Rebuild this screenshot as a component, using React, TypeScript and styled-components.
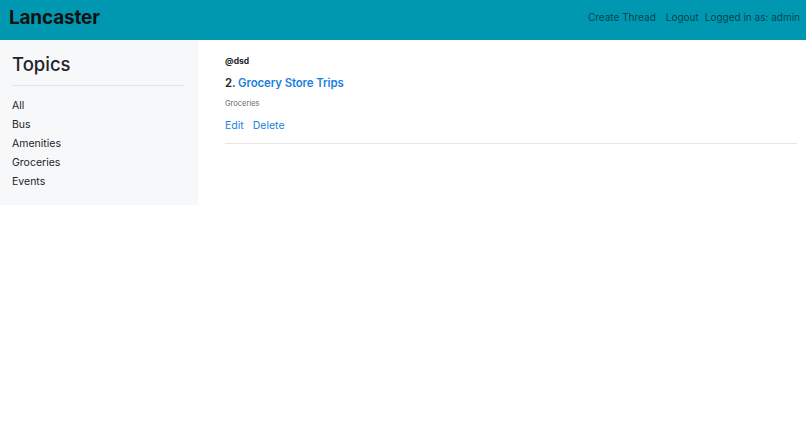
import React from 'react';
import styled, { createGlobalStyle } from 'styled-components';

const GlobalStyle = createGlobalStyle`
	body {
		margin: 0;
		font-family: Inter, "Liberation Sans", sans-serif;
		color: #212529;
		background: #fff;
	}
`;

const Navbar = styled.nav`
	height: 40px;
	background: #0098b0;
	display: flex;
	align-items: center;
	justify-content: space-between;
	padding: 0 6px 6px 9px;
	box-sizing: border-box;
`;

const Brand = styled.a`
	font-size: 19px;
	font-weight: 700;
	color: #111;
	text-decoration: none;
	letter-spacing: -0.2px;
`;

const NavLinks = styled.div`
	display: flex;
	align-items: center;
	font-size: 10px;
	color: rgba(0, 0, 0, 0.6);
`;

const NavLink = styled.a<{ $gap?: number }>`
	color: rgba(0, 0, 0, 0.6);
	text-decoration: none;
	margin-right: ${(p) => p.$gap ?? 0}px;
`;

const Layout = styled.div`
	display: flex;
	align-items: flex-start;
`;

const Sidebar = styled.aside`
	width: 198px;
	flex-shrink: 0;
	background: #f7f8fa;
	padding: 12px 13px 14px 12px;
	box-sizing: border-box;
`;

const SideTitle = styled.h3`
	margin: 0;
	font-size: 18.5px;
	font-weight: 500;
	line-height: 24px;
	padding-bottom: 9px;
	border-bottom: 1px solid #e3e5e8;
`;

const TopicList = styled.ul`
	list-style: none;
	margin: 0;
	padding: 10px 0 0;
`;

const Topic = styled.li`
	font-size: 10.5px;
	line-height: 19px;
	color: #212529;
`;

const Main = styled.main`
	flex: 1;
	padding: 16px 9px 0 27px;
`;

const Post = styled.div`
	border-bottom: 1px solid #e6e6e6;
	padding-bottom: 10px;
`;

const Author = styled.div`
	font-size: 8.5px;
	font-weight: 700;
	line-height: 11px;
`;

const PostTitle = styled.h5`
	margin: 9px 0 0;
	font-size: 11.4px;
	font-weight: 600;
	line-height: 15px;
	letter-spacing: -0.1px;
`;

const Blue = styled.a`
	color: #1a7fe0;
	text-decoration: none;
`;

const Category = styled.div`
	margin-top: 8px;
	font-size: 7.5px;
	color: #6c6c6c;
	line-height: 10px;
`;

const Actions = styled.div`
	margin-top: 10px;
	display: flex;
	gap: 9px;
	font-size: 10.5px;
	line-height: 14px;
`;

const topics = ['All', 'Bus', 'Amenities', 'Groceries', 'Events'];

export default function App() {
	return (
		<>
			<GlobalStyle />
			<Navbar>
				<Brand href="#">Lancaster</Brand>
				<NavLinks>
					<NavLink href="#" $gap={10}>Create Thread</NavLink>
					<NavLink href="#" $gap={6}>Logout</NavLink>
					<span>Logged in as: admin</span>
				</NavLinks>
			</Navbar>
			<Layout>
				<Sidebar>
					<SideTitle>Topics</SideTitle>
					<TopicList>
						{topics.map((t) => (
							<Topic key={t}>{t}</Topic>
						))}
					</TopicList>
				</Sidebar>
				<Main>
					<Post>
						<Author>@dsd</Author>
						<PostTitle>
							2. <Blue href="#">Grocery Store Trips</Blue>
						</PostTitle>
						<Category>Groceries</Category>
						<Actions>
							<Blue href="#">Edit</Blue>
							<Blue href="#">Delete</Blue>
						</Actions>
					</Post>
				</Main>
			</Layout>
		</>
	);
}
